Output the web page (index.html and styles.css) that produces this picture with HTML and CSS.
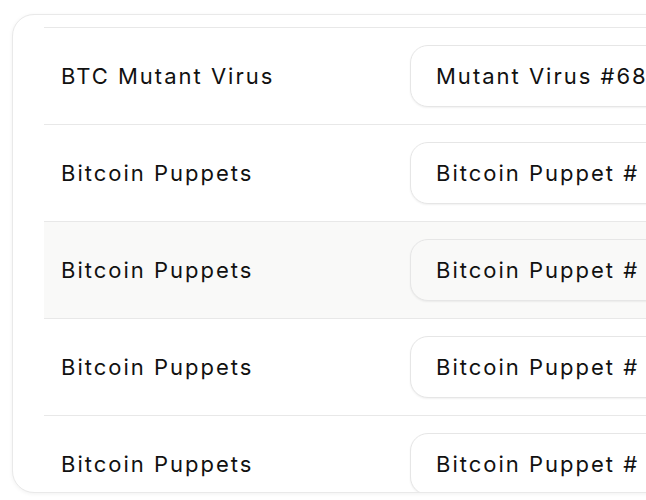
FILE: index.html
```html
<!DOCTYPE html>
<html>
<head>
<meta charset="utf-8">
<link rel="stylesheet" href="styles.css">
</head>
<body>
<div class="card">
  <div class="table">
    <div class="row">
      <div class="name">BTC Mutant Virus</div>
      <div class="item"><span class="pill">Mutant Virus #68</span></div>
    </div>
    <div class="row">
      <div class="name">Bitcoin Puppets</div>
      <div class="item"><span class="pill">Bitcoin Puppet #</span></div>
    </div>
    <div class="row hl">
      <div class="name">Bitcoin Puppets</div>
      <div class="item"><span class="pill">Bitcoin Puppet #</span></div>
    </div>
    <div class="row">
      <div class="name">Bitcoin Puppets</div>
      <div class="item"><span class="pill">Bitcoin Puppet #</span></div>
    </div>
    <div class="row">
      <div class="name">Bitcoin Puppets</div>
      <div class="item"><span class="pill">Bitcoin Puppet #</span></div>
    </div>
  </div>
</div>
</body>
</html>
```
FILE: styles.css
```css
html, body {
  margin: 0;
  padding: 0;
  background: #ffffff;
  overflow: hidden;
  width: 646px;
  height: 500px;
}
body {
  font-family: Inter, "Noto Sans", sans-serif;
  color: #111111;
}
.card {
  margin: 14px 0 0 12px;
  width: 760px;
  height: 479px;
  box-sizing: border-box;
  border: 1px solid #e9e9e9;
  border-radius: 22px;
  box-shadow: 0 1px 4px rgba(0,0,0,0.06);
  background: #fff;
  overflow: hidden;
  padding: 12px 0 0 31px;
}
.table {
  border-top: 1px solid #e8e8e8;
}
.row {
  display: flex;
  align-items: center;
  height: 96px;
  border-bottom: 1px solid #e8e8e8;
}
.row.hl {
  background: #f9f9f8;
}
.name {
  box-sizing: border-box;
  width: 366px;
  padding-left: 17px;
  font-size: 22px;
  letter-spacing: 2px;
}
.item {
  flex: 1;
}
.pill {
  display: inline-flex;
  align-items: center;
  height: 62px;
  box-sizing: border-box;
  padding: 0 25px;
  border: 1px solid #e6e6e6;
  border-radius: 18px;
  box-shadow: 0 1px 2px rgba(0,0,0,0.06);
  font-size: 22px;
  letter-spacing: 2px;
  white-space: nowrap;
  background: #fff;
}
.row.hl .pill {
  background: #f9f9f8;
}
```
